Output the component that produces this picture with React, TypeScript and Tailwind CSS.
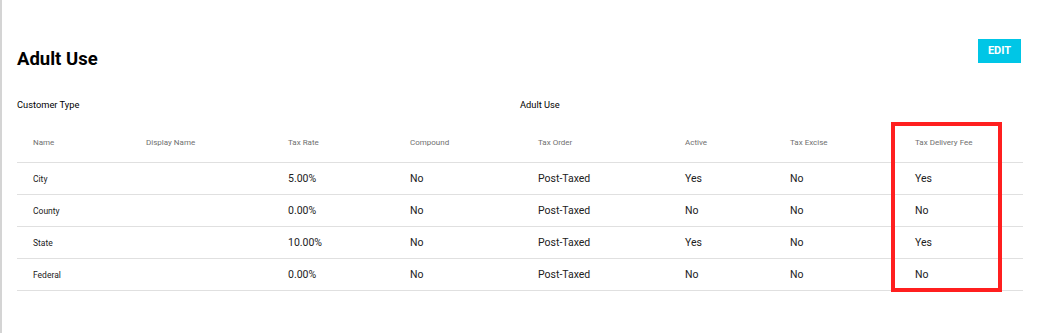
import React from "react";

const cols = [
  { label: "Name", w: "w-[129px]" },
  { label: "Display Name", w: "w-[142px]" },
  { label: "Tax Rate", w: "w-[122px]" },
  { label: "Compound", w: "w-[128px]" },
  { label: "Tax Order", w: "w-[147px]" },
  { label: "Active", w: "w-[105px]" },
  { label: "Tax Excise", w: "w-[125px]" },
  { label: "Tax Delivery Fee", w: "w-[108px]" },
];

const rows = [
  ["City", "", "5.00%", "No", "Post-Taxed", "Yes", "No", "Yes"],
  ["County", "", "0.00%", "No", "Post-Taxed", "No", "No", "No"],
  ["State", "", "10.00%", "No", "Post-Taxed", "Yes", "No", "Yes"],
  ["Federal", "", "0.00%", "No", "Post-Taxed", "No", "No", "No"],
];

export default function App() {
  return (
    <div
      className="min-h-[333px] w-[1040px] bg-white border-l-2 border-[#d4d4d4] pl-[15px] pr-[17px]"
      style={{ fontFamily: "Roboto, 'Liberation Sans', sans-serif" }}
    >
      <div className="flex items-start justify-between pt-[39px]">
        <h1 className="mt-[8px] text-[18.5px] leading-[24px] font-bold text-black">Adult Use</h1>
        <button className="mr-[2px] h-[24px] w-[43px] bg-[#00c6e6] text-white text-[11px] font-bold leading-[24px] text-center">
          EDIT
        </button>
      </div>
      <div className="grid grid-cols-2 mt-[26px] text-[9.3px] leading-[16px] text-black">
        <div>Customer Type</div>
        <div>Adult Use</div>
      </div>
      <div className="relative mt-[10px]">
        <table className="w-full border-collapse table-fixed">
          <thead>
            <tr className="h-[39px] border-b border-[#e0e0e0]">
              {cols.map((c, i) => (
                <th
                  key={c.label}
                  className={`${c.w} ${i === 0 ? "pl-[16px]" : ""} pt-[2px] text-left font-normal text-[8px] text-[#6f6f6f] align-middle`}
                >
                  {c.label}
                </th>
              ))}
            </tr>
          </thead>
          <tbody>
            {rows.map((r) => (
              <tr key={r[0]} className="h-[32px] border-b border-[#e0e0e0]">
                {r.map((v, i) => (
                  <td
                    key={i}
                    className={
                      i === 0
                        ? "pl-[16px] pt-[2px] text-[8.5px] text-[#212121] align-middle"
                        : "pt-[1px] text-[10.5px] text-[#212121] align-middle"
                    }
                  >
                    {v}
                  </td>
                ))}
              </tr>
            ))}
          </tbody>
        </table>
        <div className="absolute left-[874px] top-[-1px] w-[111px] h-[170px] border-[4px] border-[#ff1f1f] pointer-events-none" />
      </div>
    </div>
  );
}
